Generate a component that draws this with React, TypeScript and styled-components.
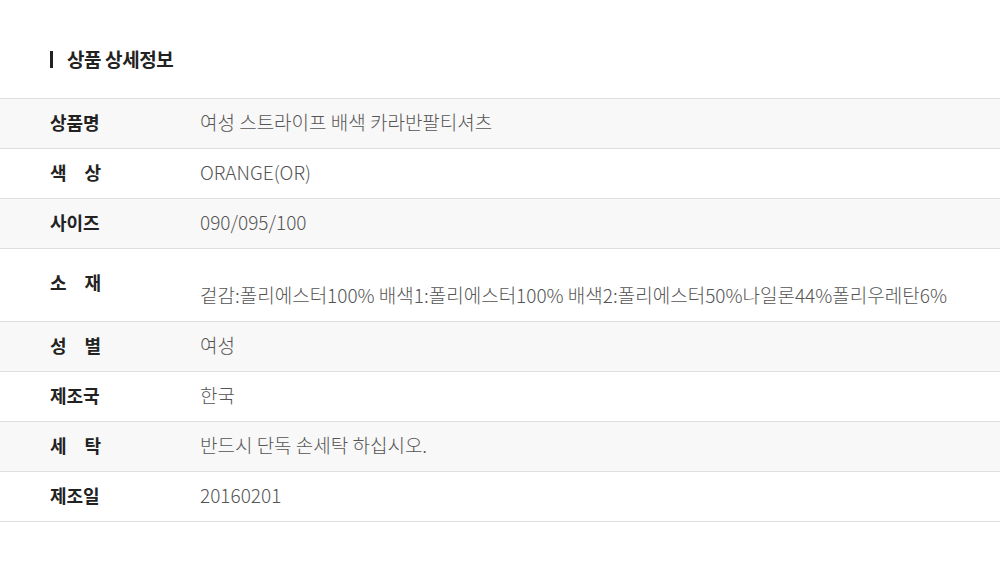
import React from "react";
import styled, { createGlobalStyle } from "styled-components";

const GlobalStyle = createGlobalStyle`
    body {
        margin: 0;
        background: #ffffff;
        font-family: "Noto Sans CJK KR", "Noto Sans", sans-serif;
    }
`;

const Page = styled.div`
    width: 1000px;
    padding-top: 47px;
`;

const Heading = styled.h2`
    display: flex;
    align-items: center;
    gap: 14px;
    margin: 0 0 27px 50px;
    font-size: 19px;
    font-weight: 700;
    color: #222;
    line-height: 24px;
    letter-spacing: -0.4px;
`;

const HeadingBar = styled.span`
    display: block;
    width: 3px;
    height: 17px;
    background: #222;
`;

const Table = styled.div`
    border-top: 1px solid #dfdfdf;
`;

const Row = styled.div<{ $shade: boolean; $tall?: boolean }>`
    display: grid;
    grid-template-columns: 200px 1fr;
    height: ${(p) => (p.$tall ? "72px" : "49px")};
    background: ${(p) => (p.$shade ? "#f8f8f8" : "#ffffff")};
    border-bottom: 1px solid #dfdfdf;
`;

const Label = styled.div<{ $tall?: boolean }>`
    padding-left: 50px;
    padding-top: ${(p) => (p.$tall ? "20px" : "10px")};
    font-size: 18px;
    font-weight: 700;
    color: #222;
    line-height: 26px;
`;

const LabelText = styled.span`
    display: block;
    width: 51px;
    text-align: justify;
    text-align-last: justify;
    white-space: nowrap;
`;

const Value = styled.div<{ $tall?: boolean }>`
    padding-top: ${(p) => (p.$tall ? "33px" : "10px")};
    font-size: 19px;
    font-weight: 300;
    color: #555;
    line-height: 26px;
    letter-spacing: 0;
    white-space: nowrap;
`;

const rows = [
    { label: "상품명", value: "여성 스트라이프 배색 카라반팔티셔츠" },
    { label: "색 상", value: "ORANGE(OR)" },
    { label: "사이즈", value: "090/095/100" },
    {
        label: "소 재",
        value: "겉감:폴리에스터100% 배색1:폴리에스터100% 배색2:폴리에스터50%나일론44%폴리우레탄6%",
        tall: true,
    },
    { label: "성 별", value: "여성" },
    { label: "제조국", value: "한국" },
    { label: "세 탁", value: "반드시 단독 손세탁 하십시오." },
    { label: "제조일", value: "20160201" },
];

const App = () => {
    return (
        <React.Fragment>
            <GlobalStyle />
            <Page>
                <Heading>
                    <HeadingBar />
                    상품 상세정보
                </Heading>
                <Table>
                    {rows.map((r, i) => (
                        <Row key={r.label} $shade={i % 2 === 0} $tall={r.tall}>
                            <Label $tall={r.tall}>
                                <LabelText>{r.label}</LabelText>
                            </Label>
                            <Value $tall={r.tall}>{r.value}</Value>
                        </Row>
                    ))}
                </Table>
            </Page>
        </React.Fragment>
    );
};

export default App;
